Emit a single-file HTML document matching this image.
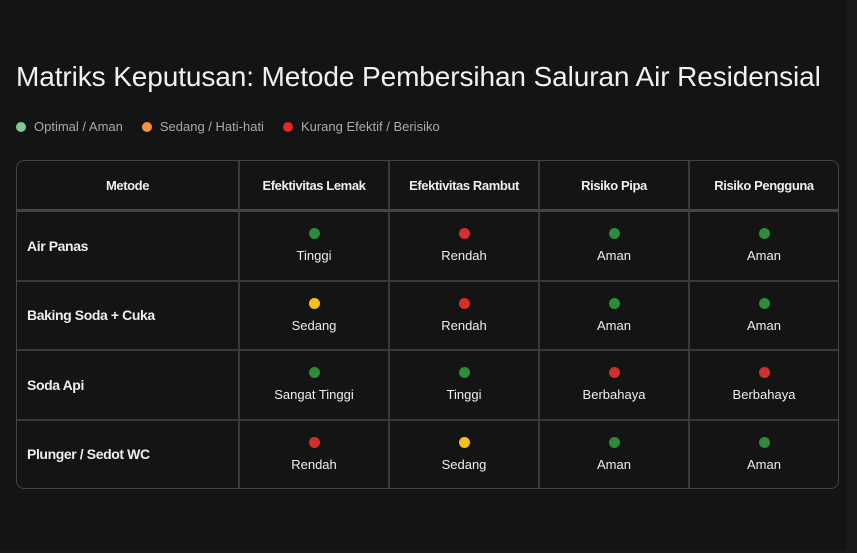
<!DOCTYPE html>
<html><head><style>
body{margin:0;width:857px;height:553px;background:#1a1a1a;font-family:"Liberation Sans",sans-serif;overflow:hidden;position:relative}
.main{position:absolute;left:0;top:0;width:847px;height:550px;background:#141414}
h1{position:absolute;left:16px;top:61px;margin:0;font-weight:400;font-size:28px;color:#f1f1f1;letter-spacing:-0.1px}
.leg{position:absolute;left:16px;top:119px;font-size:13px;color:#aaa;display:flex;gap:0}
.leg span{display:flex;align-items:center;margin-right:19px}
.leg i{width:10px;height:10px;border-radius:50%;display:inline-block;margin-right:8px}
table{position:absolute;left:16px;top:160px;width:823px;border-collapse:separate;border-spacing:0;border:1px solid #444;border-radius:8px;color:#eee;font-size:13px}
td,th{border-right:2px solid #3a3a3a;border-bottom:2px solid #3a3a3a;text-align:center;padding:0}
tr td:last-child,tr th:last-child{border-right:none}
tr:last-child td{border-bottom:none}
th{height:48px;font-size:13px;font-weight:700;letter-spacing:-0.4px;border-bottom:3px solid #444}
td{height:67.5px}
td:first-child{text-align:left;padding-left:10px;font-weight:700;font-size:14px;letter-spacing:-0.4px}
.d{width:11px;height:11px;border-radius:50%;margin:0 auto 9px}
.g{background:#2e8b3a}.r{background:#d32f2f}.y{background:#f4c020}
</style></head><body><div class="main">
<h1>Matriks Keputusan: Metode Pembersihan Saluran Air Residensial</h1>
<div class="leg"><span><i style="background:#81c995"></i>Optimal / Aman</span><span><i style="background:#f8923c"></i>Sedang / Hati-hati</span><span><i style="background:#e02a2a"></i>Kurang Efektif / Berisiko</span></div>
<table>
<tr><th style="width:221px">Metode</th><th style="width:148px">Efektivitas Lemak</th><th style="width:148px">Efektivitas Rambut</th><th style="width:148px">Risiko Pipa</th><th>Risiko Pengguna</th></tr>
<tr><td>Air Panas</td><td><div class="d g"></div>Tinggi</td><td><div class="d r"></div>Rendah</td><td><div class="d g"></div>Aman</td><td><div class="d g"></div>Aman</td></tr>
<tr><td>Baking Soda + Cuka</td><td><div class="d y"></div>Sedang</td><td><div class="d r"></div>Rendah</td><td><div class="d g"></div>Aman</td><td><div class="d g"></div>Aman</td></tr>
<tr><td>Soda Api</td><td><div class="d g"></div>Sangat Tinggi</td><td><div class="d g"></div>Tinggi</td><td><div class="d r"></div>Berbahaya</td><td><div class="d r"></div>Berbahaya</td></tr>
<tr><td>Plunger / Sedot WC</td><td><div class="d r"></div>Rendah</td><td><div class="d y"></div>Sedang</td><td><div class="d g"></div>Aman</td><td><div class="d g"></div>Aman</td></tr>
</table>
</div></body></html>
